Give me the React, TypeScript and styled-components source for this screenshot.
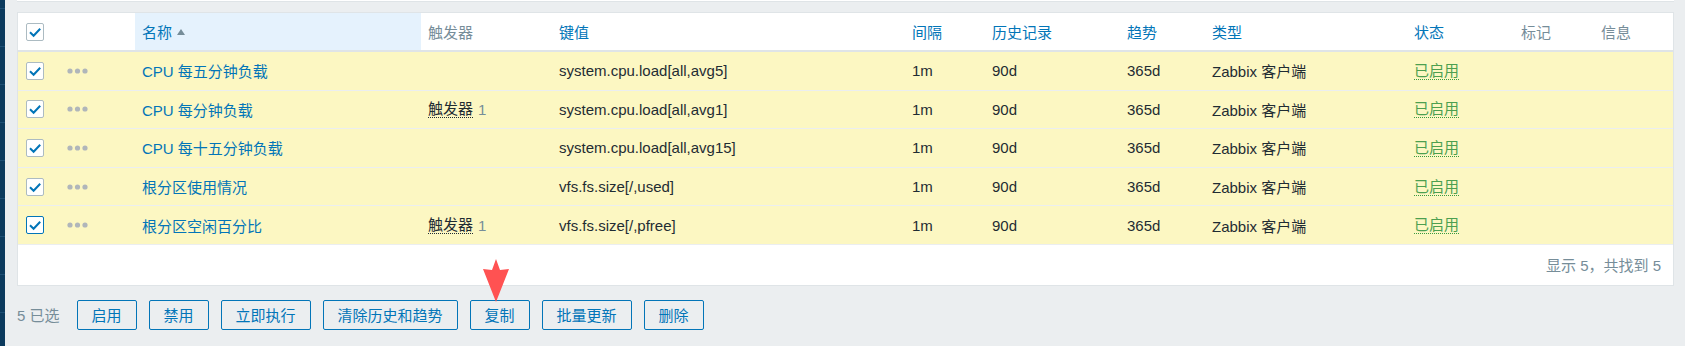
import React from 'react';
import styled, { createGlobalStyle } from 'styled-components';

const GlobalStyle = createGlobalStyle`
  html, body {
    margin: 0;
    padding: 0;
    background: #ebeef0;
  }
  body {
    font-family: 'Liberation Sans', Arial, 'Noto Sans CJK SC', sans-serif;
    font-size: 15px;
    color: #1f2c33;
  }
`;

type Item = {
  name: string;
  triggers?: number;
  key: string;
};

const items: Item[] = [
  { name: 'CPU 每五分钟负载', key: 'system.cpu.load[all,avg5]' },
  { name: 'CPU 每分钟负载', triggers: 1, key: 'system.cpu.load[all,avg1]' },
  { name: 'CPU 每十五分钟负载', key: 'system.cpu.load[all,avg15]' },
  { name: '根分区使用情况', key: 'vfs.fs.size[/,used]' },
  { name: '根分区空闲百分比', triggers: 1, key: 'vfs.fs.size[/,pfree]' },
];

const actions = ['启用', '禁用', '立即执行', '清除历史和趋势', '复制', '批量更新', '删除'];

const COLUMNS = '39px 78px 286px 131px 353px 80px 135px 85px 202px 107px 80px 1fr';

const CheckMark: React.FC<{ focused?: boolean }> = ({ focused }) => (
  <CheckBox $focused={focused}>
    <svg width="18" height="18" viewBox="0 0 18 18">
      <path d="M4 9.3 L7.6 12.8 L14.2 5.8" fill="none" stroke="#0275b8" strokeWidth="2" />
    </svg>
  </CheckBox>
);

const Dots: React.FC = () => (
  <svg width="21" height="6" viewBox="0 0 21 6">
    <circle cx="3" cy="3" r="2.6" fill="#b0b6ba" />
    <circle cx="10.5" cy="3" r="2.6" fill="#b0b6ba" />
    <circle cx="18" cy="3" r="2.6" fill="#b0b6ba" />
  </svg>
);

const RedArrow: React.FC = () => (
  <Pointer width="28" height="44" viewBox="0 0 28 44">
    <polygon points="14,0 18,11 27,10 14,43 1,10 10,11" fill="#ff5252" />
  </Pointer>
);

const App: React.FC = () => {
  return (
    <Page>
      <GlobalStyle />
      <Sidebar>
        {Array.from({ length: 9 }).map((_, i) => (
          <SideItem key={i} />
        ))}
      </Sidebar>

      <Main>
        <TopPanel />

        <Panel>
          <HeaderRow>
            <Cell $pad={8}>
              <CheckMark />
            </Cell>
            <Cell />
            <HeadCell $link $sorted>
              名称
              <SortArrow />
            </HeadCell>
            <HeadCell>触发器</HeadCell>
            <HeadCell $link>键值</HeadCell>
            <HeadCell $link>间隔</HeadCell>
            <HeadCell $link>历史记录</HeadCell>
            <HeadCell $link>趋势</HeadCell>
            <HeadCell $link>类型</HeadCell>
            <HeadCell $link>状态</HeadCell>
            <HeadCell>标记</HeadCell>
            <HeadCell>信息</HeadCell>
          </HeaderRow>

          {items.map((item, i) => (
            <Row key={item.key}>
              <Cell $pad={8}>
                <CheckMark focused={i === items.length - 1} />
              </Cell>
              <Cell $pad={10}>
                <Dots />
              </Cell>
              <Cell>
                <NameLink>{item.name}</NameLink>
              </Cell>
              <Cell>
                {item.triggers !== undefined && (
                  <>
                    <TriggerLink>触发器</TriggerLink>
                    <Count>{item.triggers}</Count>
                  </>
                )}
              </Cell>
              <Cell>{item.key}</Cell>
              <Cell>1m</Cell>
              <Cell>90d</Cell>
              <Cell>365d</Cell>
              <Cell>Zabbix 客户端</Cell>
              <Cell>
                <Status>已启用</Status>
              </Cell>
              <Cell />
              <Cell />
            </Row>
          ))}

          <Footer>显示 5，共找到 5</Footer>
        </Panel>

        <ActionBar>
          <Selected>5 已选</Selected>
          {actions.map((label) => (
            <ActionButton key={label}>
              {label}
              {label === '复制' && <RedArrow />}
            </ActionButton>
          ))}
        </ActionBar>
      </Main>
    </Page>
  );
};

export default App;

const Page = styled.div`
  display: flex;
  width: 1685px;
  height: 346px;
  overflow: hidden;
  background: #ebeef0;
`;

const Sidebar = styled.div`
  width: 5px;
  flex: none;
  background: #0b3a5d;
  padding-top: 8px;
  box-sizing: border-box;
`;

const SideItem = styled.div`
  height: 38px;
  border-top: 1px solid #1d4f74;
  box-sizing: border-box;
`;

const Main = styled.div`
  flex: 1;
  padding: 0 11px 0 12px;
`;

const TopPanel = styled.div`
  height: 1px;
  background: #fff;
  border-bottom: 1px solid #dfe4e7;
  margin-bottom: 10px;
`;

const Panel = styled.div`
  background: #fff;
  border: 1px solid #dfe4e7;
`;

const HeaderRow = styled.div`
  display: grid;
  grid-template-columns: ${COLUMNS};
  height: 39px;
  border-bottom: 2px solid #dfe4e7;
  box-sizing: border-box;
  height: 39px;
`;

const Row = styled.div`
  display: grid;
  grid-template-columns: ${COLUMNS};
  height: 38.6px;
  box-sizing: border-box;
  background: #fcf7c2;
  border-bottom: 1px solid #ebeef0;

  &:last-of-type {
    border-bottom: none;
  }
`;

const Cell = styled.div<{ $pad?: number }>`
  display: flex;
  align-items: center;
  padding-left: ${(p) => p.$pad ?? 7}px;
  white-space: nowrap;
  overflow: hidden;
  color: #1f2c33;
`;

const HeadCell = styled(Cell)<{ $link?: boolean; $sorted?: boolean }>`
  color: ${(p) => (p.$link ? '#0275b8' : '#768d99')};
  background: ${(p) => (p.$sorted ? '#e5f2fd' : 'transparent')};
`;

const SortArrow = styled.span`
  width: 0;
  height: 0;
  margin-left: 5px;
  margin-top: 1px;
  border-left: 4.5px solid transparent;
  border-right: 4.5px solid transparent;
  border-bottom: 6px solid #768d99;
`;

const CheckBox = styled.span<{ $focused?: boolean }>`
  display: inline-flex;
  width: 18px;
  height: 18px;
  box-sizing: border-box;
  background: #fff;
  border: 1px solid ${(p) => (p.$focused ? '#0275b8' : '#acbbc2')};
  border-radius: 2px;

  svg {
    margin: -1px;
  }
`;

const NameLink = styled.span`
  color: #0275b8;
`;

const TriggerLink = styled.span`
  color: #1f2c33;
  border-bottom: 1px dotted #1f2c33;
  line-height: 17px;
`;

const Count = styled.span`
  color: #768d99;
  margin-left: 5px;
`;

const Status = styled.span`
  color: #4c9f50;
  border-bottom: 1px dotted #3a9a3f;
  line-height: 17px;
`;

const Footer = styled.div`
  height: 40px;
  display: flex;
  align-items: center;
  justify-content: flex-end;
  padding-right: 12px;
  color: #768d99;
`;

const ActionBar = styled.div`
  display: flex;
  align-items: center;
  gap: 12px;
  padding-top: 14px;
`;

const Selected = styled.span`
  color: #768d99;
  margin-right: 5px;
`;

const ActionButton = styled.button`
  position: relative;
  height: 30px;
  padding: 0 14px;
  background: transparent;
  border: 1px solid #0275b8;
  border-radius: 2px;
  color: #0275b8;
  font-family: inherit;
  font-size: 15px;
  cursor: pointer;
`;

const Pointer = styled.svg`
  position: absolute;
  left: 11px;
  top: -42px;
`;
